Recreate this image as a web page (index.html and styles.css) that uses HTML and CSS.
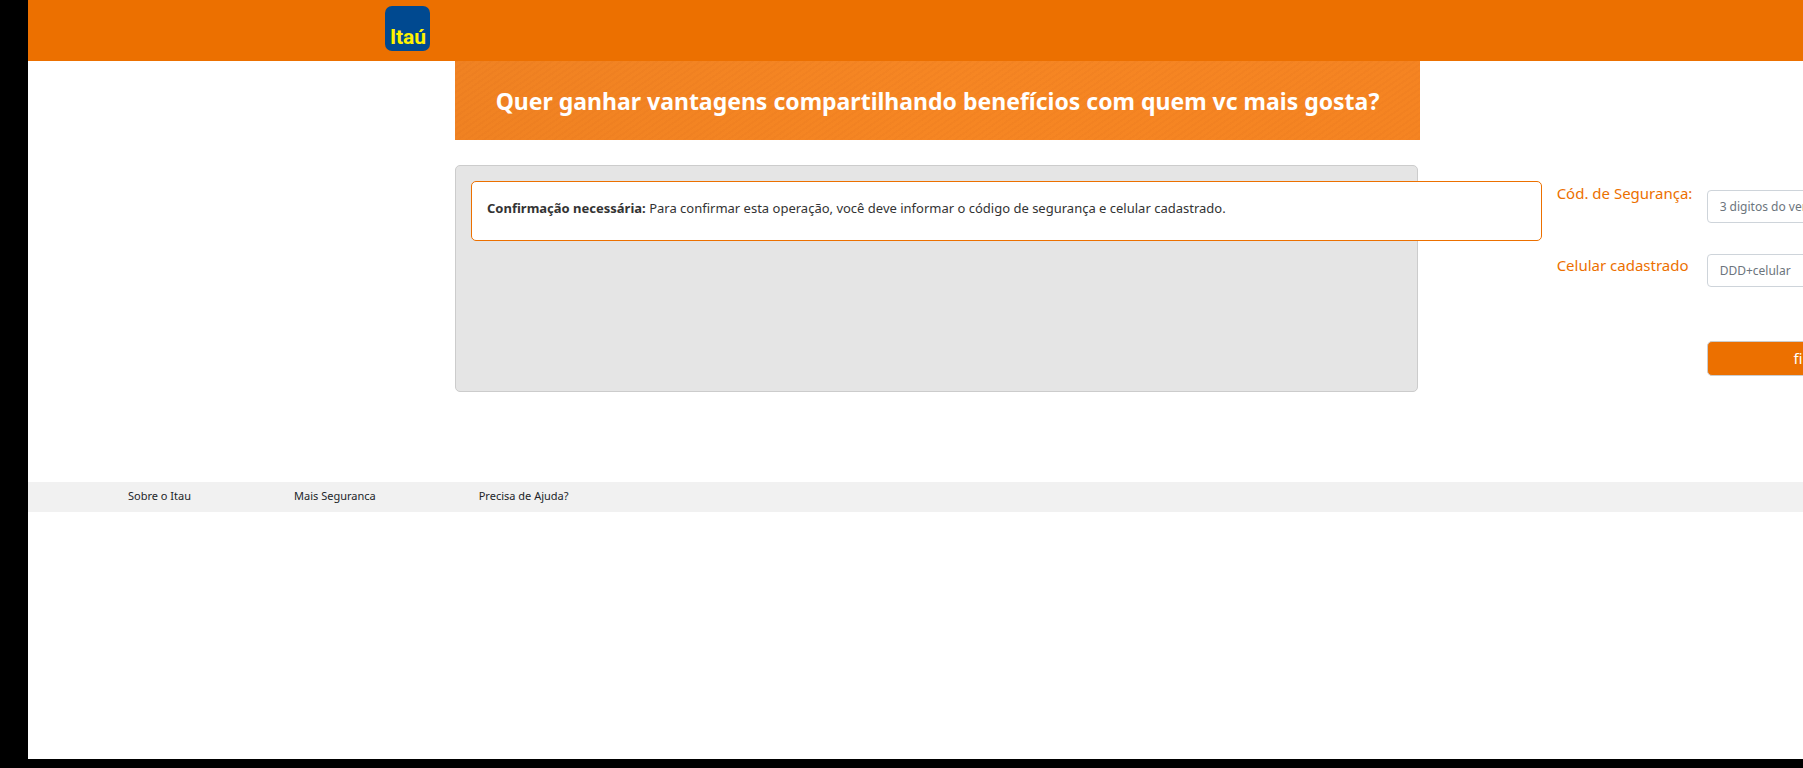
FILE: index.html
```html
<!DOCTYPE html>
<html lang="pt-BR">
<head>
<meta charset="utf-8">
<title>Itaú</title>
<link rel="stylesheet" href="styles.css">
</head>
<body>
<div class="page">
  <header class="topbar">
    <a class="logo" href="#" aria-label="Itaú">
      <svg width="45" height="45" viewBox="0 0 45 45">
        <rect width="45" height="45" rx="7" fill="#004990"/>
        <text class="logo-text" x="23" y="38" text-anchor="middle">Itaú</text>
      </svg>
    </a>
  </header>
  <main class="content">
    <h1 class="banner">Quer ganhar vantagens compartilhando benefícios com quem vc mais gosta?</h1>
    <section class="card">
      <p class="alert"><strong>Confirmação necessária:</strong> Para confirmar esta operação, você deve informar o código de segurança e celular cadastrado.</p>
      <form class="form">
        <div class="labels">
          <label for="codigo">Cód. de Segurança:</label>
          <label for="celular">Celular cadastrado</label>
        </div>
        <div class="controls">
          <input class="field" id="codigo" type="text" placeholder="3 digitos do verso">
          <input class="field" id="celular" type="tel" placeholder="DDD+celular">
          <button class="submit" type="submit">finalizar</button>
        </div>
      </form>
    </section>
  </main>
  <footer class="footer">
    <a href="#">Sobre o Itau</a>
    <a href="#">Mais Seguranca</a>
    <a href="#">Precisa de Ajuda?</a>
  </footer>
</div>
</body>
</html>
```
FILE: styles.css
```css
* {
  box-sizing: border-box;
}

body {
  margin: 0;
  padding: 0 0 9px 28px;
  background: #000;
  color: #333;
  font-family: "Noto Sans", "Open Sans", sans-serif;
  font-size: 13px;
  line-height: 20px;
}

.page {
  min-height: calc(100vh - 9px);
  background: #fff;
  overflow: hidden;
}

.topbar {
  display: flex;
  padding: 6px 0 10px 357px;
  background: #ec7000;
}

.logo,
.logo svg {
  display: block;
}

.logo-text {
  fill: #fff200;
  font-family: Roboto, "Liberation Sans", sans-serif;
  font-size: 21px;
  font-weight: 700;
}

.content {
  display: grid;
  grid-template-columns: 427fr 965fr 383fr;
}

.banner {
  grid-column: 2;
  margin: 0;
  padding: 24px 0 23px;
  background:
    repeating-linear-gradient(145deg, rgba(200, 90, 20, 0.07) 0 2px, transparent 2px 5px),
    linear-gradient(90deg, #f08222, #f68623 50%, #f58422);
  color: #fff;
  font-size: 23px;
  font-weight: 700;
  line-height: 32px;
  text-align: center;
  white-space: nowrap;
}

.card {
  grid-column: 2;
  display: flex;
  align-items: flex-start;
  gap: 15px;
  margin: 25px 2px 90px 0;
  padding: 15px;
  border: 1px solid #ccc;
  border-radius: 5px;
  background: #e5e5e5;
}

.alert {
  flex: 0 0 115%;
  margin: 0;
  padding: 16px 15px 22px;
  border: 1px solid #ec7000;
  border-radius: 5px;
  background: #fff;
}

.form {
  flex: none;
  display: grid;
  grid-template-columns: 150px 230px;
}

.labels,
.controls {
  display: flex;
  flex-direction: column;
}

.labels {
  gap: 48px;
  color: #ec7000;
  font-size: 15px;
  line-height: 24px;
}

.controls {
  padding-top: 9px;
}

.field {
  height: 33px;
  margin-bottom: 31px;
  padding: 4px 12px;
  border: 1px solid #ced4da;
  border-radius: 4px;
  background: #fff;
  font: inherit;
  font-size: 12px;
}

.field::placeholder {
  color: #6c757d;
  opacity: 1;
}

.submit {
  height: 35px;
  margin-top: 23px;
  padding: 0 6px 2px;
  border: 1px solid #ccc;
  border-radius: 5px;
  background: #ec7000;
  color: #fff;
  font: inherit;
  font-size: 15px;
}

.footer {
  display: flex;
  gap: 103px;
  padding: 4px 100px 6px;
  background: #f1f1f1;
  font-size: 11px;
}

.footer a {
  color: #212529;
  text-decoration: none;
}
```
